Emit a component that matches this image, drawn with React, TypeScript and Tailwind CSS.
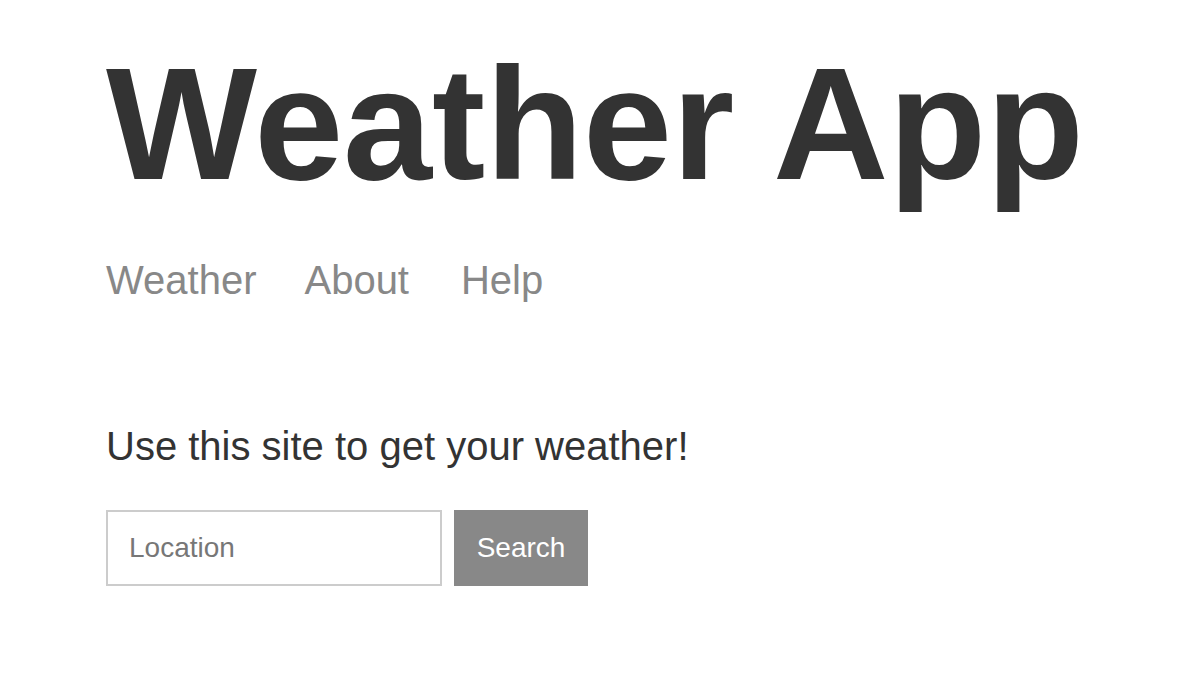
import React from "react";

export default function App() {
  return (
    <div className="min-h-[692px] w-full bg-white pl-[106px] font-['Liberation_Sans',Arial,sans-serif]">
      {/* header */}
      <header className="pt-[44px]">
        <h1 className="text-[160px] font-bold leading-none text-[#333333]">
          Weather App
        </h1>
        <nav className="mt-[56px] flex gap-[48px] text-[40px] leading-none text-[#888888]">
          <a href="#">Weather</a>
          <a href="#">About</a>
          <a href="#" className="ml-[4px]">
            Help
          </a>
        </nav>
      </header>

      {/* main */}
      <main className="mt-[126px]">
        <p className="text-[40px] leading-none text-[#333333]">
          Use this site to get your weather!
        </p>
        <form className="mt-[44px] flex gap-[12px]">
          <input
            placeholder="Location"
            className="h-[76px] w-[336px] border-2 border-[#cccccc] px-[21px] text-[28px] text-[#333333] outline-none placeholder:text-[#777777]"
          />
          <button
            type="button"
            className="h-[76px] w-[134px] bg-[#888888] text-[28px] text-white"
          >
            Search
          </button>
        </form>
      </main>
    </div>
  );
}
